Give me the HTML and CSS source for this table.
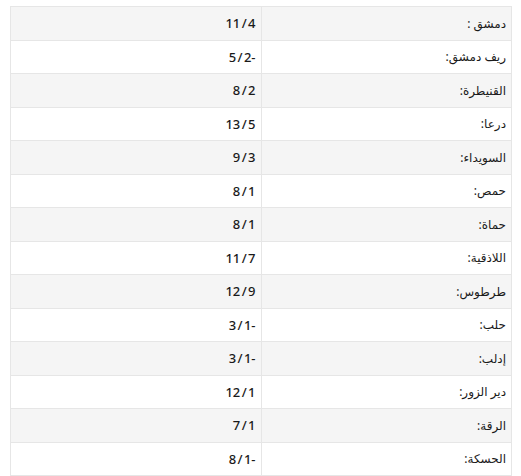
FILE: index.html
```html
<!DOCTYPE html>
<html lang="ar" dir="rtl">
<head>
<meta charset="utf-8">
<link rel="stylesheet" href="styles.css">
</head>
<body>
<div class="wrap">
<table class="weather">
<tbody>
<tr><td class="city">دمشق :</td><td class="temp"><span class="val">11 / 4</span></td></tr>
<tr><td class="city">ريف دمشق:</td><td class="temp"><span class="val">5 / 2-</span></td></tr>
<tr><td class="city">القنيطرة:</td><td class="temp"><span class="val">8 / 2</span></td></tr>
<tr><td class="city">درعا:</td><td class="temp"><span class="val">13 / 5</span></td></tr>
<tr><td class="city">السويداء:</td><td class="temp"><span class="val">9 / 3</span></td></tr>
<tr><td class="city">حمص:</td><td class="temp"><span class="val">8 / 1</span></td></tr>
<tr><td class="city">حماة:</td><td class="temp"><span class="val">8 / 1</span></td></tr>
<tr><td class="city">اللاذقية:</td><td class="temp"><span class="val">11 / 7</span></td></tr>
<tr><td class="city">طرطوس:</td><td class="temp"><span class="val">12 / 9</span></td></tr>
<tr><td class="city">حلب:</td><td class="temp"><span class="val">3 / 1-</span></td></tr>
<tr><td class="city">إدلب:</td><td class="temp"><span class="val">3 / 1-</span></td></tr>
<tr><td class="city">دير الزور:</td><td class="temp"><span class="val">12 / 1</span></td></tr>
<tr><td class="city">الرقة:</td><td class="temp"><span class="val">7 / 1</span></td></tr>
<tr><td class="city">الحسكة:</td><td class="temp"><span class="val">8 / 1-</span></td></tr>
</tbody>
</table>
</div>
</body>
</html>
```
FILE: styles.css
```css
html, body {
  margin: 0;
  padding: 0;
  background: #ffffff;
}
.wrap {
  padding: 6px 9px 0 10px;
}
.weather {
  width: 502px;
  border-collapse: collapse;
  font-family: "Noto Sans", "DejaVu Sans", sans-serif;
  font-size: 12px;
  color: #1a1a1a;
  table-layout: fixed;
}
.weather td {
  height: 33.5px;
  box-sizing: border-box;
  border: 1px solid #e6e6e6;
  padding: 0 5px;
  vertical-align: middle;
}
.weather tr:nth-child(odd) td {
  background: #f5f5f5;
}
.city {
  text-align: right;
}
.temp {
  text-align: right;
}
.val {
  direction: ltr;
  unicode-bidi: bidi-override;
  font-size: 13px;
  font-weight: 500;
  word-spacing: -2px;
}
```
